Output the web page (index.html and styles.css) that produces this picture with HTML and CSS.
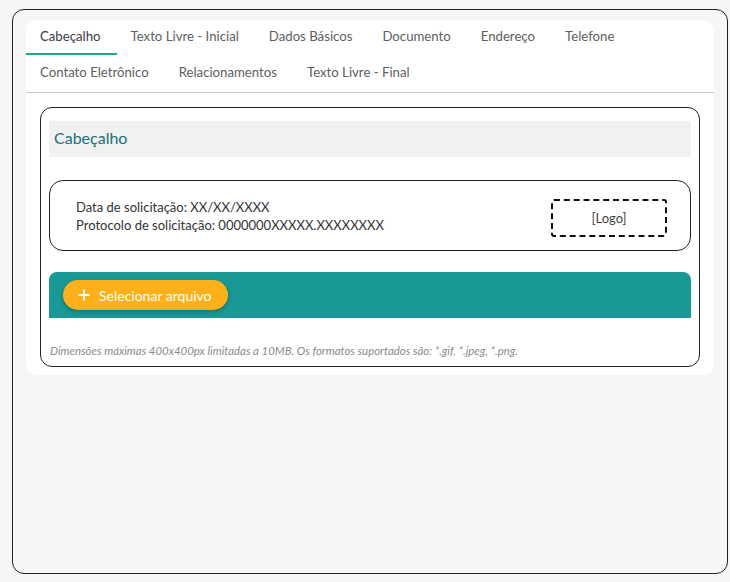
FILE: index.html
```html
<!DOCTYPE html>
<html lang="pt-BR">
<head>
<meta charset="utf-8">
<title>Cabeçalho</title>
<link rel="stylesheet" href="styles.css">
</head>
<body>
<div class="frame">
  <div class="card">
    <nav class="tabs">
      <div class="tab-row">
        <span class="tab active">Cabeçalho</span>
        <span class="tab">Texto Livre - Inicial</span>
        <span class="tab">Dados Básicos</span>
        <span class="tab">Documento</span>
        <span class="tab">Endereço</span>
        <span class="tab">Telefone</span>
      </div>
      <div class="tab-row">
        <span class="tab">Contato Eletrônico</span>
        <span class="tab">Relacionamentos</span>
        <span class="tab">Texto Livre - Final</span>
      </div>
    </nav>
    <section class="panel">
      <div class="panel-title">Cabeçalho</div>
      <div class="info-box">
        <div class="info-text">
          <div>Data de solicitação: XX/XX/XXXX</div>
          <div>Protocolo de solicitação: 0000000XXXXX.XXXXXXXX</div>
        </div>
        <div class="logo-box">[Logo]</div>
      </div>
      <div class="upload-bar">
        <button class="upload-btn" type="button">
          <svg class="plus" width="12" height="12" viewBox="0 0 12 12"><path d="M6 0.5V11.5M0.5 6H11.5" stroke="#fff" stroke-width="2" fill="none"/></svg>
          <span>Selecionar arquivo</span>
        </button>
      </div>
      <p class="caption">Dimensões máximas 400x400px limitadas a 10MB. Os formatos suportados são: *.gif, *.jpeg, *.png.</p>
    </section>
  </div>
</div>
</body>
</html>
```

FILE: styles.css
```css
* { box-sizing: border-box; }
html, body { margin: 0; padding: 0; background: #f6f6f6; }
body {
  font-family: "Lato", "Noto Sans", sans-serif;
  color: #333;
  width: 730px;
  height: 582px;
  overflow: hidden;
}
.frame {
  margin: 9px 0 0 12px;
  width: 716px;
  height: 565px;
  border: 1px solid #222;
  border-radius: 12px;
  background: #f6f6f6;
  padding: 10px 13px 0 13px;
}
.card {
  background: #fff;
  border-radius: 10px;
  padding-bottom: 8px;
}
.tabs {
  border-bottom: 1px solid #c9c9c9;
}
.tab-row {
  display: flex;
}
.tab-row:first-child { height: 35px; }
.tab-row:last-child { height: 37px; }
.tab {
  padding: 0 16px 2px 14px;
  font-size: 13.2px;
  color: #606060;
  display: flex;
  align-items: center;
  border-bottom: 2px solid transparent;
}
.tab-row:last-child .tab { border-bottom: 0; padding-bottom: 3px; }
.tab.active {
  color: #3a3a4a;
  border-bottom-color: #1ea98b;
}
.panel {
  margin: 14px 14px 0 14px;
  border: 1px solid #222;
  border-radius: 12px;
  padding: 13px 8px 9px 8px;
}
.panel-title {
  background: #f0f1f1;
  height: 36px;
  padding: 0 0 3px 5px;
  display: flex;
  align-items: center;
  font-size: 16px;
  color: #226d78;
}
.info-box {
  margin-top: 23px;
  height: 71px;
  border: 1px solid #222;
  border-radius: 14px;
  display: flex;
  align-items: center;
  justify-content: space-between;
  padding: 0 23px 0 26px;
}
.info-text {
  font-size: 13px;
  line-height: 18px;
  color: #333;
}
.logo-box {
  width: 116px;
  height: 38px;
  margin-top: 4px;
  border: 2px dashed #111;
  border-radius: 3px;
  display: flex;
  align-items: center;
  justify-content: center;
  font-size: 13px;
  color: #444;
}
.upload-bar {
  margin-top: 21px;
  height: 46px;
  background: #1a9895;
  border-radius: 8px 8px 0 0;
  padding: 8px 14px;
}
.upload-btn {
  height: 30px;
  width: 165px;
  border: 0;
  border-radius: 15px;
  background: #fdb01a;
  box-shadow: 0 2px 4px rgba(0,0,0,0.25);
  color: #fff;
  font-family: inherit;
  font-size: 14px;
  display: flex;
  align-items: center;
  gap: 9px;
  padding: 0 0 0 15px;
}
.plus { flex: none; }
.caption {
  margin: 26px 0 0 1px;
  font-size: 11.4px;
  font-style: italic;
  color: #8a8a8a;
  line-height: 13px;
}
```
